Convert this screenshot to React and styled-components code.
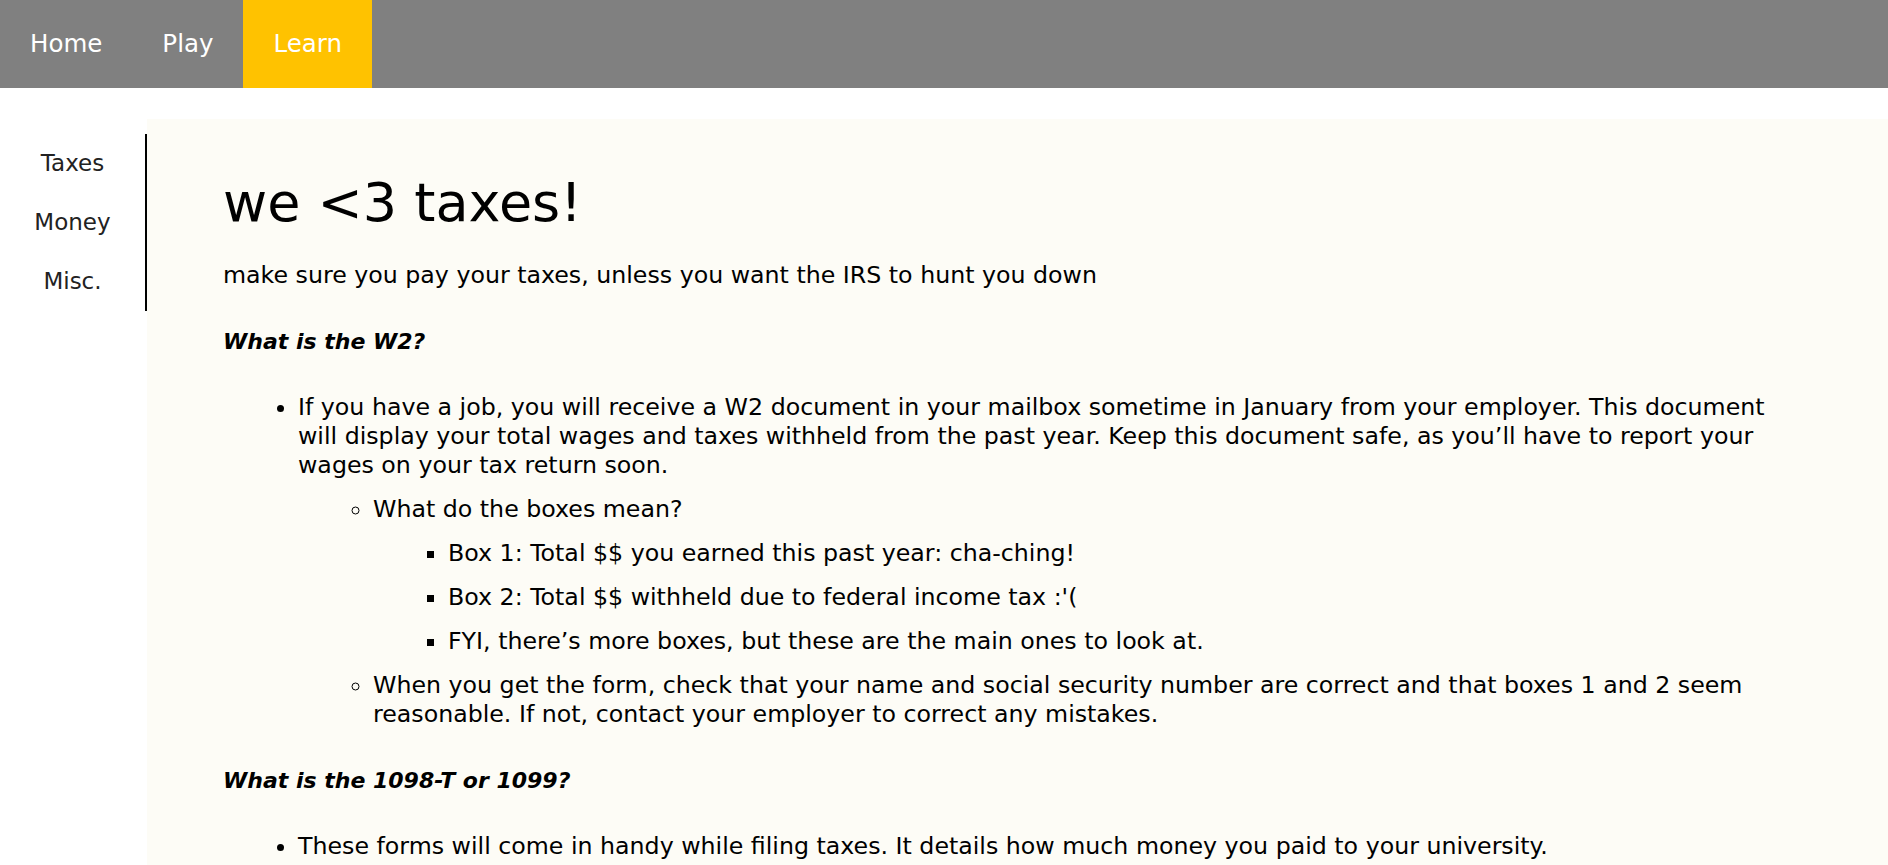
import styled, { createGlobalStyle } from 'styled-components'

const GlobalStyle = createGlobalStyle`
    html {
        scrollbar-width: none;
    }
    html::-webkit-scrollbar {
        display: none;
    }
    body {
        margin: 0;
        background: #ffffff;
        font-family: "DejaVu Sans", "Liberation Sans", sans-serif;
        color: #000000;
    }
`

const navItems = ['Home', 'Play', 'Learn']
const sideItems = ['Taxes', 'Money', 'Misc.']

export default function App(){
    return(
        <>
            <GlobalStyle/>
            <S.NavBar>
                {navItems.map((item)=>(
                    <S.NavItem key={item} $active={item === 'Learn'}>{item}</S.NavItem>
                ))}
            </S.NavBar>

            <S.Layout>
                <S.SideNav>
                    {sideItems.map((item)=>(
                        <S.SideItem key={item}>{item}</S.SideItem>
                    ))}
                </S.SideNav>

                <S.Panel>
                    <S.Title>we &lt;3 taxes!</S.Title>
                    <S.Lead>make sure you pay your taxes, unless you want the IRS to hunt you down</S.Lead>

                    <S.Question>What is the W2?</S.Question>
                    <S.List>
                        <S.Item>
                            If you have a job, you will receive a W2 document in your mailbox sometime in January from your employer. This document will display your total wages and taxes withheld from the past year. Keep this document safe, as you’ll have to report your wages on your tax return soon.
                            <S.List>
                                <S.Item>
                                    What do the boxes mean?
                                    <S.List>
                                        <S.Item>Box 1: Total $$ you earned this past year: cha-ching!</S.Item>
                                        <S.Item>Box 2: Total $$ withheld due to federal income tax :'(</S.Item>
                                        <S.Item>FYI, there’s more boxes, but these are the main ones to look at.</S.Item>
                                    </S.List>
                                </S.Item>
                                <S.Item>
                                    When you get the form, check that your name and social security number are correct and that boxes 1 and 2 seem reasonable. If not, contact your employer to correct any mistakes.
                                </S.Item>
                            </S.List>
                        </S.Item>
                    </S.List>

                    <S.Question>What is the 1098-T or 1099?</S.Question>
                    <S.List>
                        <S.Item>These forms will come in handy while filing taxes. It details how much money you paid to your university.</S.Item>
                    </S.List>
                </S.Panel>
            </S.Layout>
        </>
    )
}

const S = {
    NavBar: styled.nav`
        display: flex;
        height: 88px;
        background: #808080;
    `,

    NavItem: styled.a`
        padding: 0 30px;
        line-height: 88px;
        font-size: 24.5px;
        color: #ffffff;
        background: ${props => props.$active ? '#ffc200' : 'transparent'};
        cursor: pointer;
    `,

    Layout: styled.div`
        display: flex;
        align-items: flex-start;
        margin-top: 31px;
    `,

    SideNav: styled.div`
        flex: 0 0 145px;
        margin-top: 15px;
        border-right: 2px solid #000000;
        display: flex;
        flex-direction: column;
    `,

    SideItem: styled.a`
        height: 59px;
        line-height: 59px;
        text-align: center;
        font-size: 23px;
        color: #222222;
        cursor: pointer;
    `,

    Panel: styled.main`
        flex: 1;
        min-width: 0;
        background: #fdfcf6;
        padding: 51px 90px 40px 76px;
        font-size: 23.7px;
        line-height: 29px;
    `,

    Title: styled.h1`
        margin: 0;
        font-size: 54px;
        line-height: 66px;
        font-weight: 400;
    `,

    Lead: styled.p`
        margin: 25px 0 0 0;
    `,

    Question: styled.p`
        margin: 37px 0;
        font-size: 22px;
        font-weight: 700;
        font-style: italic;
    `,

    List: styled.ul`
        margin: 0;
        padding-left: 75px;
    `,

    Item: styled.li`
        margin: 15px 0;
    `
}
